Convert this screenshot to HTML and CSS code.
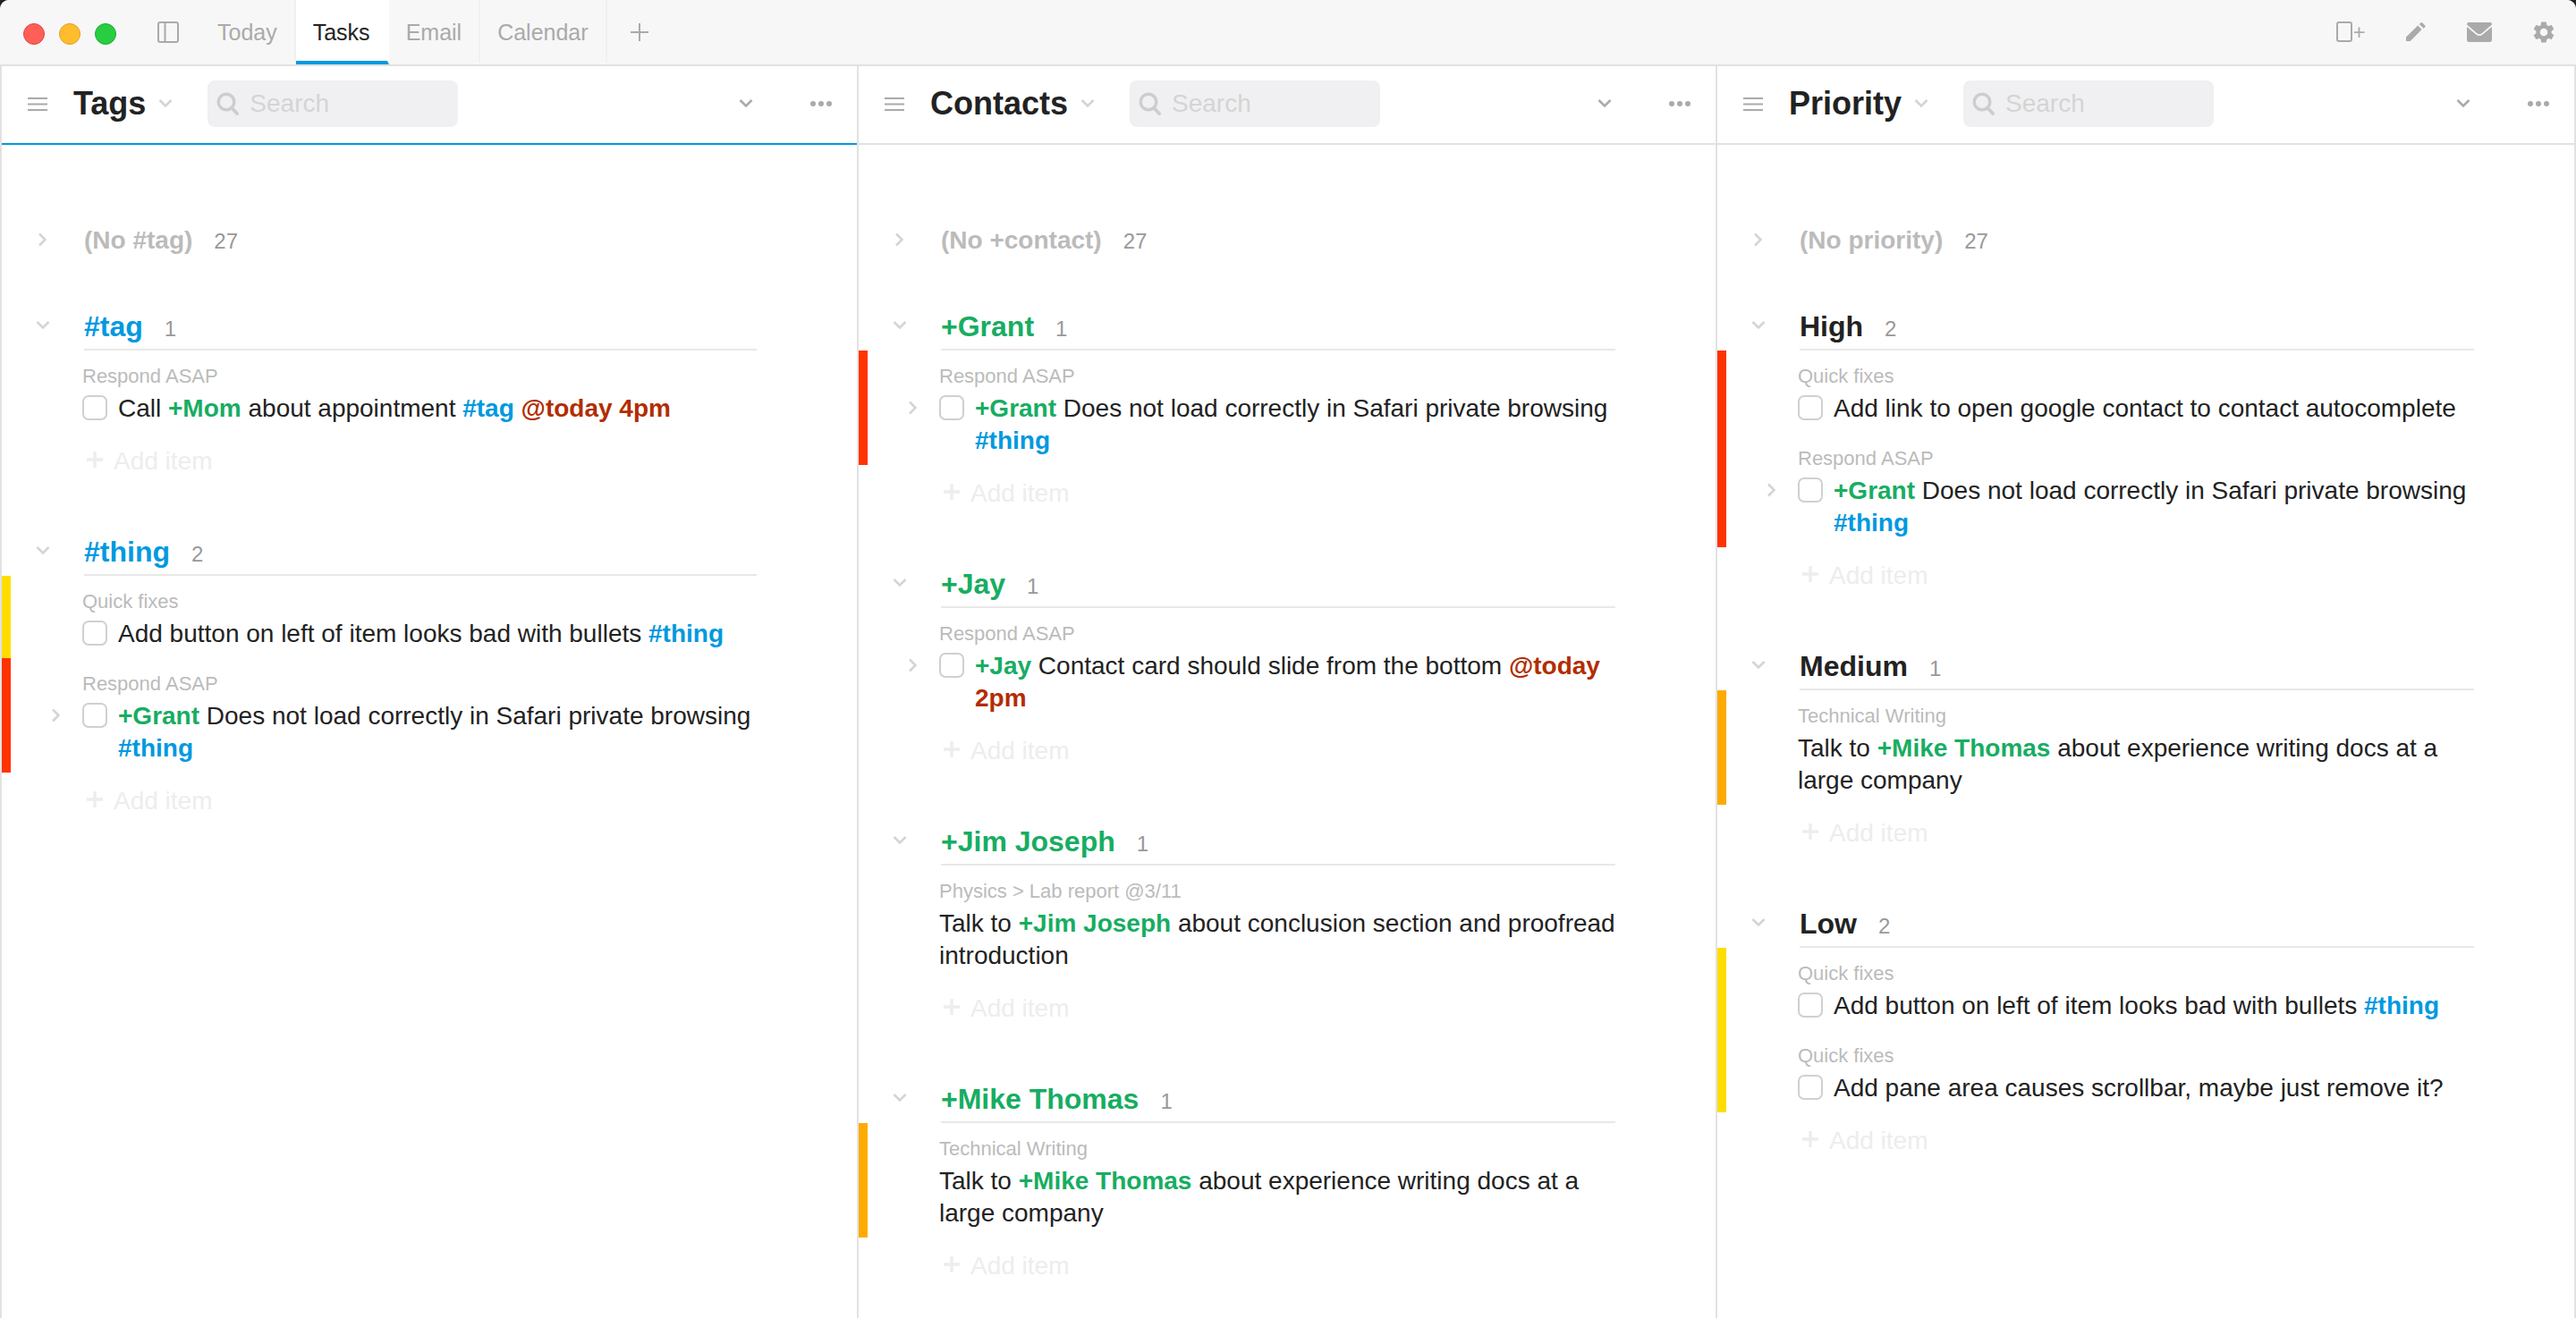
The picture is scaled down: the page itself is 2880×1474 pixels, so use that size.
FILE: index.html
```html
<!DOCTYPE html>
<html lang="en">
<head>
<meta charset="utf-8">
<title>Tasks</title>
<link rel="stylesheet" href="styles.css">
</head>
<body>
<svg class="sprite" aria-hidden="true">
  <symbol id="down" viewBox="0 0 16 12"><path d="M1.5 2 8 8.5 14.5 2" fill="none" stroke="currentColor" stroke-width="2.5"/></symbol>
  <symbol id="right" viewBox="0 0 12 16"><path d="M2 1.500 8.500 8 2 14.500" fill="none" stroke="currentColor" stroke-width="2.500"/></symbol>
  <symbol id="menu" viewBox="0 0 22 16"><path d="M0 2h22M0 8.500h22M0 15h22" stroke="currentColor" stroke-width="2"/></symbol>
  <symbol id="dots" viewBox="0 0 24 6"><g fill="currentColor"><circle cx="3" cy="3" r="3"/><circle cx="12" cy="3" r="3"/><circle cx="21" cy="3" r="3"/></g></symbol>
  <symbol id="search" viewBox="0 0 26 26"><g fill="none" stroke="currentColor" stroke-width="3.500"><circle cx="11" cy="11" r="8.800"/><path d="m17 17.500 6 6.500" stroke-width="4" stroke-linecap="round"/></g></symbol>
  <symbol id="plus" viewBox="0 0 18 18"><path d="M9 0v18M0 9h18" stroke="currentColor" stroke-width="3.400"/></symbol>
</svg>
<div class="window">
  <header class="titlebar">
    <div class="lights"><button class="light close" aria-label="Close"></button><button class="light minimise" aria-label="Minimise"></button><button class="light zoom" aria-label="Zoom"></button></div>
    <button class="icon sidebar" aria-label="Sidebar"><svg width="24" height="24" viewBox="0 0 24 24" fill="none" stroke="currentColor" stroke-width="2"><rect x="1" y="1" width="22" height="22" rx="2"/><path d="M8.500 1v22"/></svg></button>
    <nav class="tabs">
      <a class="tab" href="#today">Today</a>
      <a class="tab active" href="#tasks">Tasks</a>
      <a class="tab" href="#email">Email</a>
      <a class="tab" href="#calendar">Calendar</a>
    </nav>
    <button class="icon add-tab" aria-label="Add tab"><svg width="20" height="20" viewBox="0 0 20 20"><path d="M10 0v20M0 10h20" stroke="currentColor" stroke-width="2"/></svg></button>
    <div class="tools">
      <button class="icon" aria-label="Add pane"><svg width="32" height="24" viewBox="0 0 32 24" fill="none" stroke="currentColor" stroke-width="2"><rect x="1" y="1" width="16" height="21" rx="2"/><path d="M25.500 6.500v11.500M20 12.200h11.500" stroke-width="1.800"/></svg></button>
      <button class="icon" aria-label="Edit"><svg width="22" height="22" viewBox="0 0 22 22" fill="currentColor"><path d="M0 21v-4.500L13.200 3.600l4.400 4.400L4.800 21zM14.800 2l1.600-1.500q1-.8 1.900 0l2.900 2.900q.8.900 0 1.800L19.500 6.800z"/></svg></button>
      <button class="icon" aria-label="Mail"><svg width="28" height="22" viewBox="0 0 28 22" fill="currentColor"><path d="M2 0h24q2 0 2 2v.600L17 12q-3 2.400-6 0L0 2.600V2q0-2 2-2zM0 5l10.200 8.600q3.800 3 7.600 0L28 5v14.500q0 2.500-2.500 2.500h-23Q0 22 0 19.500z"/></svg></button>
      <button class="icon" aria-label="Settings"><svg width="24" height="24" viewBox="2 2 20 20" fill="currentColor"><path d="M19.140 12.940c.040-.300.060-.610.060-.940 0-.320-.020-.640-.070-.940l2.030-1.580c.180-.140.230-.410.120-.610l-1.920-3.320c-.120-.220-.370-.290-.590-.220l-2.390.960c-.500-.380-1.030-.700-1.620-.940l-.360-2.540c-.040-.240-.240-.410-.480-.410h-3.840c-.240 0-.430.170-.470.410l-.360 2.540c-.590.240-1.130.570-1.620.940l-2.390-.960c-.220-.080-.470 0-.590.220L2.740 8.870c-.120.210-.080.470.120.610l2.030 1.580c-.050.300-.090.630-.090.940s.020.640.070.940l-2.030 1.580c-.180.140-.230.410-.120.610l1.920 3.320c.120.220.370.290.590.220l2.390-.960c.500.380 1.030.700 1.620.940l.360 2.540c.050.240.240.410.480.410h3.840c.240 0 .440-.170.470-.410l.360-2.540c.590-.240 1.130-.560 1.620-.940l2.390.960c.220.080.470 0 .590-.220l1.920-3.320c.120-.220.070-.470-.120-.610l-2.010-1.580zM12 15.600c-1.980 0-3.600-1.620-3.600-3.600s1.620-3.600 3.600-3.600 3.600 1.620 3.600 3.600-1.620 3.600-3.600 3.600z"/></svg></button>
    </div>
  </header>

  <main class="panes">
    <section class="pane focused">
      <header class="pane-head">
        <button class="icon" aria-label="Menu"><svg width="22" height="16"><use href="#menu"/></svg></button>
        <h1>Tags</h1>
        <button class="icon pale title-caret" aria-label="Choose list"><svg width="16" height="12"><use href="#down"/></svg></button>
        <label class="search"><svg width="26" height="26"><use href="#search"/></svg><input type="search" placeholder="Search" aria-label="Search tags"></label>
        <button class="icon collapse" aria-label="Collapse"><svg width="16" height="12"><use href="#down"/></svg></button>
        <button class="icon" aria-label="More"><svg width="24" height="6"><use href="#dots"/></svg></button>
      </header>
      <div class="list">
        <div class="group-head closed"><button class="fold" aria-label="Expand"><svg width="12" height="16"><use href="#right"/></svg></button><h2>(No #tag)</h2><span class="count">27</span></div>
        <section class="group">
          <div class="group-head"><button class="fold" aria-label="Collapse"><svg width="16" height="12"><use href="#down"/></svg></button><h2 class="tag">#tag</h2><span class="count">1</span></div>
          <article class="item"><p class="from">Respond ASAP</p><div class="row"><input type="checkbox" id="a1"><label for="a1">Call <b class="contact">+Mom</b> about appointment <b class="tag">#tag</b> <b class="date">@today 4pm</b></label></div></article>
          <button class="add"><svg width="18" height="18"><use href="#plus"/></svg>Add item</button>
        </section>
        <section class="group">
          <div class="group-head"><button class="fold" aria-label="Collapse"><svg width="16" height="12"><use href="#down"/></svg></button><h2 class="tag">#thing</h2><span class="count">2</span></div>
          <article class="item low"><p class="from">Quick fixes</p><div class="row"><input type="checkbox" id="a2"><label for="a2">Add button on left of item looks bad with bullets <b class="tag">#thing</b></label></div></article>
          <article class="item high"><p class="from">Respond ASAP</p><div class="row"><button class="open" aria-label="Expand"><svg width="12" height="16"><use href="#right"/></svg></button><input type="checkbox" id="a3"><label for="a3"><b class="contact">+Grant</b> Does not load correctly in Safari private browsing <b class="tag">#thing</b></label></div></article>
          <button class="add"><svg width="18" height="18"><use href="#plus"/></svg>Add item</button>
        </section>
      </div>
    </section>

    <section class="pane">
      <header class="pane-head">
        <button class="icon" aria-label="Menu"><svg width="22" height="16"><use href="#menu"/></svg></button>
        <h1>Contacts</h1>
        <button class="icon pale title-caret" aria-label="Choose list"><svg width="16" height="12"><use href="#down"/></svg></button>
        <label class="search"><svg width="26" height="26"><use href="#search"/></svg><input type="search" placeholder="Search" aria-label="Search contacts"></label>
        <button class="icon collapse" aria-label="Collapse"><svg width="16" height="12"><use href="#down"/></svg></button>
        <button class="icon" aria-label="More"><svg width="24" height="6"><use href="#dots"/></svg></button>
      </header>
      <div class="list">
        <div class="group-head closed"><button class="fold" aria-label="Expand"><svg width="12" height="16"><use href="#right"/></svg></button><h2>(No +contact)</h2><span class="count">27</span></div>
        <section class="group">
          <div class="group-head"><button class="fold" aria-label="Collapse"><svg width="16" height="12"><use href="#down"/></svg></button><h2 class="contact">+Grant</h2><span class="count">1</span></div>
          <article class="item high"><p class="from">Respond ASAP</p><div class="row"><button class="open" aria-label="Expand"><svg width="12" height="16"><use href="#right"/></svg></button><input type="checkbox" id="b1"><label for="b1"><b class="contact">+Grant</b> Does not load correctly in Safari private browsing <b class="tag">#thing</b></label></div></article>
          <button class="add"><svg width="18" height="18"><use href="#plus"/></svg>Add item</button>
        </section>
        <section class="group">
          <div class="group-head"><button class="fold" aria-label="Collapse"><svg width="16" height="12"><use href="#down"/></svg></button><h2 class="contact">+Jay</h2><span class="count">1</span></div>
          <article class="item"><p class="from">Respond ASAP</p><div class="row"><button class="open" aria-label="Expand"><svg width="12" height="16"><use href="#right"/></svg></button><input type="checkbox" id="b2"><label for="b2"><b class="contact">+Jay</b> Contact card should slide from the bottom <b class="date">@today 2pm</b></label></div></article>
          <button class="add"><svg width="18" height="18"><use href="#plus"/></svg>Add item</button>
        </section>
        <section class="group">
          <div class="group-head"><button class="fold" aria-label="Collapse"><svg width="16" height="12"><use href="#down"/></svg></button><h2 class="contact">+Jim Joseph</h2><span class="count">1</span></div>
          <article class="item"><p class="from">Physics &gt; Lab report @3/11</p><p class="note">Talk to <b class="contact">+Jim Joseph</b> about conclusion section and proofread introduction</p></article>
          <button class="add"><svg width="18" height="18"><use href="#plus"/></svg>Add item</button>
        </section>
        <section class="group">
          <div class="group-head"><button class="fold" aria-label="Collapse"><svg width="16" height="12"><use href="#down"/></svg></button><h2 class="contact">+Mike Thomas</h2><span class="count">1</span></div>
          <article class="item medium"><p class="from">Technical Writing</p><p class="note">Talk to <b class="contact">+Mike Thomas</b> about experience writing docs at a large company</p></article>
          <button class="add"><svg width="18" height="18"><use href="#plus"/></svg>Add item</button>
        </section>
      </div>
    </section>

    <section class="pane">
      <header class="pane-head">
        <button class="icon" aria-label="Menu"><svg width="22" height="16"><use href="#menu"/></svg></button>
        <h1>Priority</h1>
        <button class="icon pale title-caret" aria-label="Choose list"><svg width="16" height="12"><use href="#down"/></svg></button>
        <label class="search"><svg width="26" height="26"><use href="#search"/></svg><input type="search" placeholder="Search" aria-label="Search priorities"></label>
        <button class="icon collapse" aria-label="Collapse"><svg width="16" height="12"><use href="#down"/></svg></button>
        <button class="icon" aria-label="More"><svg width="24" height="6"><use href="#dots"/></svg></button>
      </header>
      <div class="list">
        <div class="group-head closed"><button class="fold" aria-label="Expand"><svg width="12" height="16"><use href="#right"/></svg></button><h2>(No priority)</h2><span class="count">27</span></div>
        <section class="group">
          <div class="group-head"><button class="fold" aria-label="Collapse"><svg width="16" height="12"><use href="#down"/></svg></button><h2>High</h2><span class="count">2</span></div>
          <article class="item high"><p class="from">Quick fixes</p><div class="row"><input type="checkbox" id="c1"><label for="c1">Add link to open google contact to contact autocomplete</label></div></article>
          <article class="item high"><p class="from">Respond ASAP</p><div class="row"><button class="open" aria-label="Expand"><svg width="12" height="16"><use href="#right"/></svg></button><input type="checkbox" id="c2"><label for="c2"><b class="contact">+Grant</b> Does not load correctly in Safari private browsing <b class="tag">#thing</b></label></div></article>
          <button class="add"><svg width="18" height="18"><use href="#plus"/></svg>Add item</button>
        </section>
        <section class="group">
          <div class="group-head"><button class="fold" aria-label="Collapse"><svg width="16" height="12"><use href="#down"/></svg></button><h2>Medium</h2><span class="count">1</span></div>
          <article class="item medium"><p class="from">Technical Writing</p><p class="note">Talk to <b class="contact">+Mike Thomas</b> about experience writing docs at a large company</p></article>
          <button class="add"><svg width="18" height="18"><use href="#plus"/></svg>Add item</button>
        </section>
        <section class="group">
          <div class="group-head"><button class="fold" aria-label="Collapse"><svg width="16" height="12"><use href="#down"/></svg></button><h2>Low</h2><span class="count">2</span></div>
          <article class="item low"><p class="from">Quick fixes</p><div class="row"><input type="checkbox" id="c3"><label for="c3">Add button on left of item looks bad with bullets <b class="tag">#thing</b></label></div></article>
          <article class="item low"><p class="from">Quick fixes</p><div class="row"><input type="checkbox" id="c4"><label for="c4">Add pane area causes scrollbar, maybe just remove it?</label></div></article>
          <button class="add"><svg width="18" height="18"><use href="#plus"/></svg>Add item</button>
        </section>
      </div>
    </section>
  </main>
</div>
</body>
</html>
```
FILE: styles.css
```css
* { box-sizing: border-box; }

body {
  margin: 0;
  background: linear-gradient(#222, #b0b0b0);
  color: #222;
  font: 28px/36px "Liberation Sans", Arial, sans-serif;
}

h1, h2, p { margin: 0; }

svg { display: block; }

.sprite { display: none; }

button {
  padding: 0;
  border: 0;
  background: none;
  color: inherit;
  font: inherit;
}

.window {
  display: flex;
  flex-direction: column;
  min-height: 100vh;
  overflow: hidden;
  border-radius: 10px;
  background: #fff;
}

.icon { color: #aaa; }
.pale { color: #d4d4d4; }

/* Title bar */
.titlebar {
  display: flex;
  align-items: center;
  height: 74px;
  padding: 0 24px 0 26px;
  border-bottom: 2px solid #e2e2e2;
  background: #f7f7f7;
}

.lights { display: flex; gap: 16px; padding-top: 4px; }

.light {
  width: 24px;
  height: 24px;
  border: 1px solid;
  border-radius: 50%;
}

.close { background: #ff5f57; border-color: #e2463f; }
.minimise { background: #ffbd2e; border-color: #dfa023; }
.zoom { background: #28cd41; border-color: #1eae32; }

.sidebar { margin: 0 24px 0 46px; }

.tabs { display: flex; align-self: stretch; }

.tab {
  display: flex;
  align-items: center;
  padding: 6px 19px 2px;
  border-right: 2px solid #f0f0f0;
  border-bottom: 4px solid transparent;
  color: #aaa;
  font-size: 25px;
  text-decoration: none;
}

.tab.active {
  border-bottom-color: #0099e0;
  border-right-color: #fff;
  background: #fff;
  color: #222;
}

.add-tab { margin-left: 26px; }

.tools { display: flex; align-items: center; gap: 46px; margin-left: auto; }

/* Panes */
.panes {
  display: grid;
  flex: 1;
  grid-template-columns: repeat(3, minmax(0, 1fr));
}

.pane { border-right: 2px solid #e2e2e2; }
.pane:first-child { border-left: 2px solid #e2e2e2; }

.pane-head {
  display: flex;
  align-items: center;
  height: 88px;
  padding: 0 28px 2px 29px;
  border-bottom: 2px solid #e2e2e2;
}

.focused .pane-head { border-bottom-color: #0099e0; }

h1 {
  margin: 0 14px 0 29px;
  font-size: 36px;
  line-height: 44px;
}

.search {
  display: flex;
  align-items: center;
  gap: 11px;
  width: 280px;
  height: 52px;
  margin-left: 39px;
  padding: 0 10px;
  border-radius: 8px;
  background: #f0f0f2;
  color: #cdcdcd;
}

.search input {
  flex: 1;
  min-width: 0;
  padding: 0;
  border: 0;
  outline: 0;
  background: none;
  color: #222;
  font: inherit;
}

.search input::placeholder { color: #d4d4d4; opacity: 1; }

.collapse { margin: 0 64px 0 auto; }

/* Grouped lists */
.list { padding: 76px 0 40px; }

.group { margin-bottom: 42px; }

.group-head {
  position: relative;
  display: flex;
  align-items: baseline;
  gap: 24px;
  height: 54px;
  margin: 0 112px 0 92px;
  padding-top: 9px;
  border-bottom: 2px solid #e8e8e8;
}

.group-head.closed {
  margin-bottom: 46px;
  padding-top: 13px;
  border-color: transparent;
  color: #bbb;
}

h2 { font-size: 32px; line-height: 36px; }
.closed h2 { font-size: 28px; }

.count { color: #999; font-size: 24px; }

.fold {
  position: absolute;
  top: 16px;
  left: -54px;
  display: grid;
  width: 16px;
  height: 20px;
  place-items: center;
  color: #d4d4d4;
}

.closed .fold { top: 20px; }

.item {
  padding: 16px 98px 9px 80px;
  border-left: 10px solid transparent;
}

.high { border-left-color: #ff3300; }
.medium { border-left-color: #ffaa00; }
.low { border-left-color: #ffdd00; }

.from {
  margin-bottom: 5px;
  color: #bbb;
  font-size: 22px;
  line-height: 26px;
}

.row { position: relative; display: flex; gap: 12px; }

.row input {
  flex: none;
  width: 28px;
  height: 28px;
  margin: 3px 0 0;
  border: 2px solid #d0d0d0;
  border-radius: 7px;
  appearance: none;
  background: #fff;
}

.open {
  position: absolute;
  top: 9px;
  left: -35px;
  color: #d4d4d4;
}

.tag { color: #0099e0; }
.contact { color: #17ad62; }
.date { color: #b22d00; }

.add {
  display: flex;
  align-items: center;
  gap: 12px;
  height: 64px;
  margin-left: 95px;
  color: #ededed;
}

.add svg { margin-bottom: 4px; }
```
